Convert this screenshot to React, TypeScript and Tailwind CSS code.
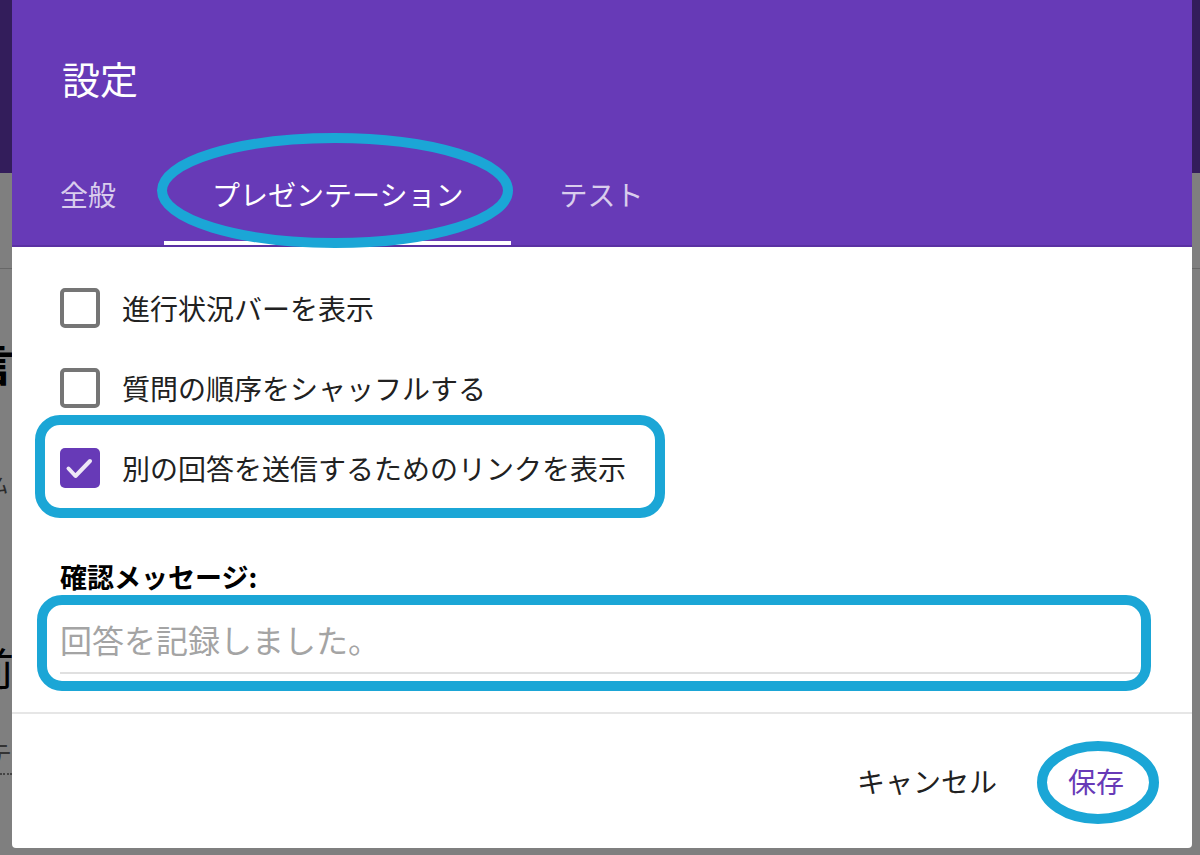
import { useState } from 'react'

const jp = "font-['Noto_Sans_CJK_JP',sans-serif]"

// The form page that sits behind the modal; only a thin strip of it shows.
function PageBehind() {
  return (
    <div className="flex h-full w-full flex-col bg-white">
      <div className="h-[173px] bg-[#673ab7]" />
      <div className="mt-[95px] h-px bg-[#cfcfcf]" />
      <div className="mt-[72px] -ml-[30px] text-[44px] leading-none font-bold text-black">言</div>
      <div className="mt-[90px] -ml-[12px] text-[20px] leading-none italic text-[#555]">ム</div>
      <div className="mt-[150px] -ml-[30px] text-[44px] leading-none text-black">前</div>
      <div className="mt-[52px] -ml-[14px] text-[26px] leading-none text-[#666]">テ</div>
      <div className="mt-[6px] w-[12px] border-b-2 border-dotted border-[#888]" />
    </div>
  )
}

function Checkbox({ checked }: { checked: boolean }) {
  if (checked) {
    return (
      <span className="flex h-[40px] w-[40px] shrink-0 items-center justify-center rounded-[5px] bg-[#673ab7]">
        <svg width="40" height="40" viewBox="0 0 40 40" fill="none">
          <path d="M8.5 20.5 L15.5 28 L30 13" stroke="#ede7f6" strokeWidth="4" strokeLinecap="round" strokeLinejoin="round" />
        </svg>
      </span>
    )
  }
  return <span className="h-[40px] w-[40px] shrink-0 rounded-[5px] border-[4px] border-[#757575]" />
}

export default function App() {
  const [tab] = useState(1)
  const [opts, setOpts] = useState([false, false, true])
  const tabs = ['全般', 'プレゼンテーション', 'テスト']
  const labels = ['進行状況バーを表示', '質問の順序をシャッフルする', '別の回答を送信するためのリンクを表示']

  return (
    <div className={`relative h-[855px] w-[1200px] overflow-hidden ${jp}`}>
      <PageBehind />
      <div className="absolute inset-0 bg-black/50" />

      {/* ── Settings dialog ─────────────────────────────────────────── */}
      <div className="absolute left-[12px] top-0 flex h-[848px] w-[1180px] flex-col overflow-hidden rounded-b-[4px] bg-white">
        <div className="flex h-[245px] flex-col bg-[#673ab7] shadow-[0_2px_0_#5a31a3]">
          <div className="flex h-[149px] items-center pl-[50px] pt-[7px] text-[38px] leading-none text-white">設定</div>
          <div className="flex h-[96px]">
            {tabs.map((t, i) => (
              <div
                key={t}
                className={
                  i === tab
                    ? 'flex items-center border-b-[4px] border-white px-12 pb-[2px] text-[28px] leading-none text-white'
                    : 'flex items-center border-b-[4px] border-transparent px-12 pb-[2px] text-[28px] leading-none text-white/75'
                }
              >
                {t}
              </div>
            ))}
          </div>
        </div>

        <div className="flex flex-col px-12 pt-[23px] pb-[38px]">
          {labels.map((l, i) => (
            <label
              key={l}
              className="flex h-[80px] cursor-pointer items-center gap-[22px]"
              onClick={() => setOpts(o => o.map((v, j) => (j === i ? !v : v)))}
            >
              <Checkbox checked={opts[i]} />
              <span className="text-[28px] leading-none text-[#212121]">{l}</span>
            </label>
          ))}

          <div className="mt-[55px] text-[27px] leading-none font-bold text-black">確認メッセージ:</div>
          <input
            type="text"
            placeholder="回答を記録しました。"
            className="mt-[16px] h-[68px] w-full border-b-2 border-[#e0e0e0] bg-transparent text-[32px] leading-none text-[#212121] placeholder-[#a4a4a4] outline-none"
          />
        </div>

        <div className="flex flex-1 items-center justify-end gap-[71px] border-t-2 border-[#e6e6e6] pr-[68px]">
          <button className="text-[28px] leading-none text-[#212121]">キャンセル</button>
          <button className="text-[28px] leading-none text-[#673ab7]">保存</button>
        </div>
      </div>

      {/* ── Annotation marks drawn over the screenshot ──────────────── */}
      <svg className="pointer-events-none absolute inset-0" width="1200" height="855" fill="none">
        <g stroke="#1ba6d6" strokeWidth="10">
          <ellipse cx="335" cy="190.5" rx="173" ry="52.5" />
          <rect x="40" y="420" width="620" height="93" rx="20" />
          <rect x="42" y="600" width="1104" height="86" rx="20" />
          <ellipse cx="1098" cy="782.5" rx="56" ry="36.5" />
        </g>
      </svg>
    </div>
  )
}
